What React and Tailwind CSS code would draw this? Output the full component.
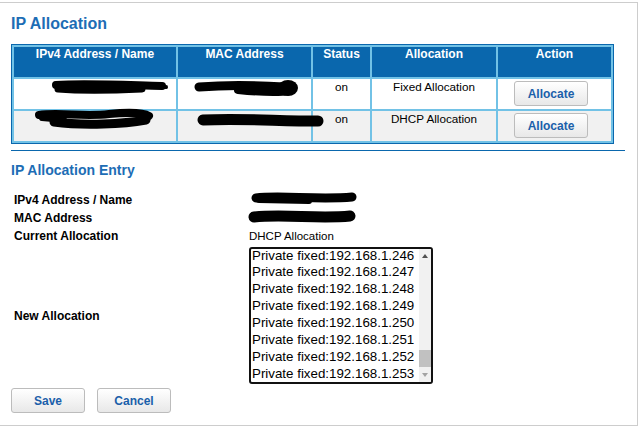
import React from 'react';

// black marker strokes used to hide the addresses
function Scribble({ w, h, paths, blobs = [], className = '' }) {
    return (
        <svg width={w} height={h} viewBox={`0 0 ${w} ${h}`} className={`block overflow-visible ${className}`}>
            {paths.map((p, i) => (
                <path key={i} d={p.d} stroke="#000" strokeWidth={p.sw} strokeLinecap="round" fill="none" />
            ))}
            {blobs.map((b, i) => (
                <ellipse key={i} cx={b.cx} cy={b.cy} rx={b.rx} ry={b.ry} fill="#000" />
            ))}
        </svg>
    );
}

const tableRows = [
    {
        id: 1,
        status: 'on',
        alloc: 'Fixed Allocation',
        bg: 'bg-white',
        ip: [
            { d: 'M42 6 C 70 4, 110 6, 148 7', sw: 8 },
            { d: 'M44 10 C 70 12, 105 11, 128 10', sw: 7 },
            { d: 'M138 7 L 152 8', sw: 4 },
        ],
        mac: [
            { d: 'M21 8 C 45 6, 75 6, 106 8', sw: 9 },
            { d: 'M60 11 C 80 13, 100 14, 112 12', sw: 8 },
        ],
        macBlobs: [{ cx: 110, cy: 9, rx: 10, ry: 8 }],
    },
    {
        id: 2,
        status: 'on',
        alloc: 'DHCP Allocation',
        bg: 'bg-[#f1f1f1]',
        ip: [
            { d: 'M25 4 C 45 1, 70 6, 95 3 C 115 1, 130 2, 135 5', sw: 8 },
            { d: 'M40 11 C 70 15, 110 13, 132 9', sw: 9 },
            { d: 'M28 7 L 50 9', sw: 6 },
        ],
        mac: [{ d: 'M25 9 C 60 7, 100 10, 140 10', sw: 11 }],
        macBlobs: [],
    },
];

const options = [247, 248, 249, 250, 251, 252, 253];

function ActionButton({ children, className = '' }) {
    return (
        <button
            className={`w-[74px] h-[25px] rounded-[3px] border border-[#bcbcbc] bg-gradient-to-b from-white to-[#e8e8e8] text-[12px] font-bold text-[#1b5faa] ${className}`}
        >
            {children}
        </button>
    );
}

export default function App() {
    return (
        <div className="min-h-screen bg-white pt-[2px] font-['Liberation_Sans',Arial,sans-serif] text-black">
            <div className="w-[638px] h-[424px] border-t border-r border-b border-[#cdcdcd] pl-[11px]">
                <h1 className="mt-[12px] text-[16px] leading-[18px] font-bold text-[#1d6db5]">IP Allocation</h1>

                <div className="mt-[11px] w-[603px] border border-[#0a67ad] bg-[#72c2e6] p-[2px] grid grid-cols-[162px_133px_57px_124px_113px] grid-rows-[30px_30px_30px] gap-[2px]">
                    {['IPv4 Address / Name', 'MAC Address', 'Status', 'Allocation', 'Action'].map((h) => (
                        <div key={h} className="bg-[#0a67ad] text-center text-white text-[12px] font-bold leading-[14px]">
                            {h}
                        </div>
                    ))}
                    {tableRows.map((row) => (
                        <React.Fragment key={row.id}>
                            <div className={row.bg}>
                                <Scribble w={162} h={30} paths={row.ip} />
                            </div>
                            <div className={row.bg}>
                                <Scribble w={133} h={30} paths={row.mac} blobs={row.macBlobs} className="relative z-10" />
                            </div>
                            <div className={`${row.bg} text-center text-[11.7px] leading-[15px]`}>{row.status}</div>
                            <div className={`${row.bg} text-center text-[11.7px] leading-[15px]`}>{row.alloc}</div>
                            <div className={row.bg}>
                                <ActionButton className="ml-[16px] mt-[2px]">Allocate</ActionButton>
                            </div>
                        </React.Fragment>
                    ))}
                </div>

                <div className="mt-[6px] h-px w-[614px] bg-[#0a67ad]" />

                <h2 className="mt-[11px] text-[14px] leading-[16px] font-bold text-[#1d6db5]">IP Allocation Entry</h2>

                <div className="mt-[13px] ml-[3px] grid grid-cols-[235px_auto] text-[12px]">
                    <div className="font-bold leading-[18px]">IPv4 Address / Name</div>
                    <div className="h-[18px]">
                        <Scribble
                            w={120}
                            h={18}
                            paths={[
                                { d: 'M7 7 C 30 4, 70 9, 103 6', sw: 9 },
                                { d: 'M10 9 L 60 10', sw: 6 },
                            ]}
                        />
                    </div>
                    <div className="font-bold leading-[18px]">MAC Address</div>
                    <div className="h-[18px]">
                        <Scribble w={120} h={18} paths={[{ d: 'M5 8 C 35 5, 70 10, 101 7', sw: 11 }]} />
                    </div>
                    <div className="font-bold leading-[18px]">Current Allocation</div>
                    <div className="text-[11.5px] leading-[18px]">DHCP Allocation</div>
                    <div className="font-bold self-center">New Allocation</div>
                    <div className="py-[2px]">
                        <div className="w-[184px] h-[137px] border-2 border-[#111] rounded-[3px] flex overflow-hidden">
                            <div className="flex-1 flex flex-col overflow-hidden pl-[1px] text-[13.33px] whitespace-nowrap">
                                {/* list is scrolled to the bottom, first row sits a bit higher */}
                                <div className="shrink-0 leading-[14px]">Private fixed:192.168.1.246</div>
                                {options.map((n) => (
                                    <div key={n} className="shrink-0 leading-[17px]">Private fixed:192.168.1.{n}</div>
                                ))}
                            </div>
                            <div className="w-[12px] bg-[#f1f1f1] flex flex-col">
                                <div className="h-[13px] flex items-center justify-center">
                                    <svg width="6" height="4" viewBox="0 0 6 4">
                                        <polygon points="0,4 3,0 6,4" fill="#505050" />
                                    </svg>
                                </div>
                                <div className="flex-1 flex flex-col justify-end">
                                    <div className="h-[17px] bg-[#c1c1c1]" />
                                </div>
                                <div className="h-[15px] flex items-center justify-center">
                                    <svg width="6" height="4" viewBox="0 0 6 4">
                                        <polygon points="0,0 6,0 3,4" fill="#a3a3a3" />
                                    </svg>
                                </div>
                            </div>
                        </div>
                    </div>
                </div>

                <div className="mt-[2px] flex gap-[12px]">
                    <ActionButton>Save</ActionButton>
                    <ActionButton>Cancel</ActionButton>
                </div>
            </div>
        </div>
    );
}
